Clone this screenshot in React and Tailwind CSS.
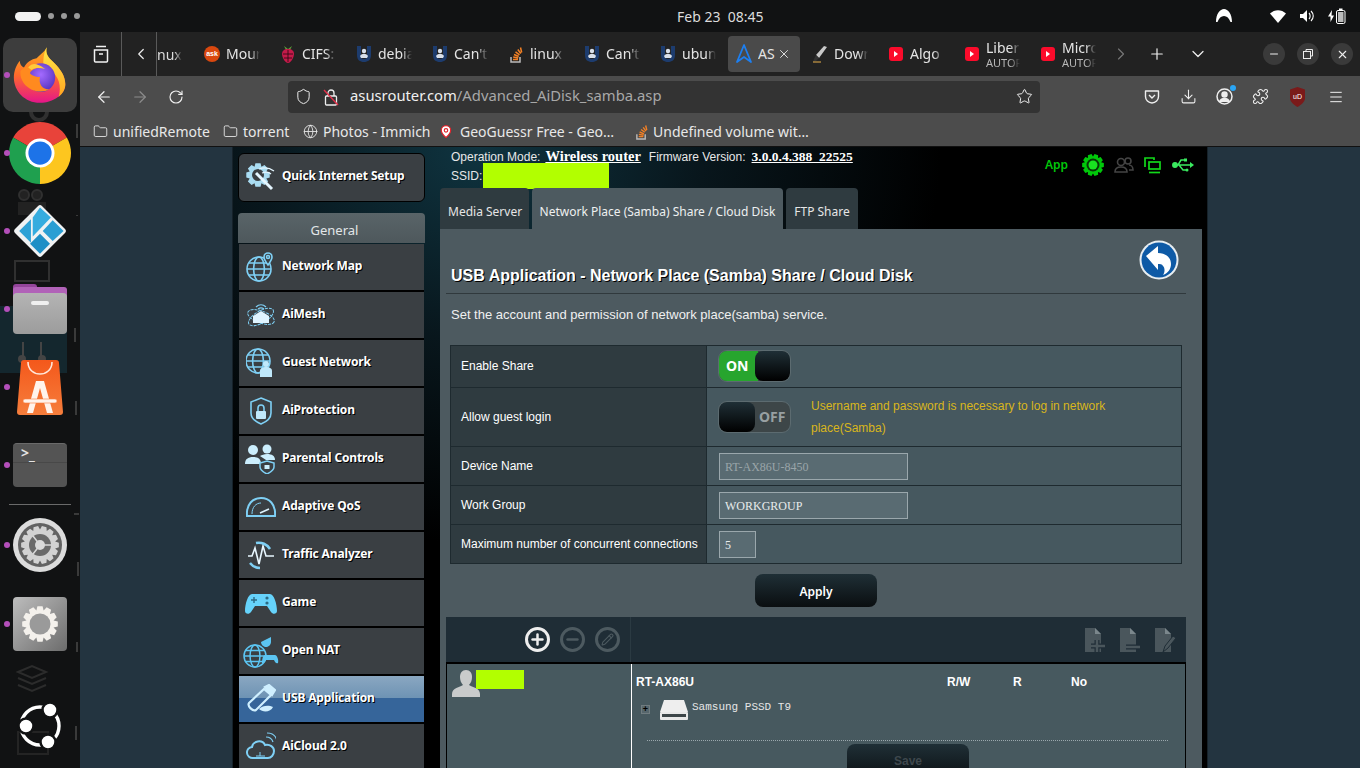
import React from "react";
import {
  ArrowLeft, ArrowRight, RotateCw, Star, Download, Menu, Folder, Globe, X, Plus, ChevronDown,
  ChevronLeft, ChevronRight, Minus, Shield, Puzzle, Pencil, MapPin,
} from "lucide-react";

const UI = "font-['Noto_Sans',sans-serif]";
const ARIAL = "font-['Liberation_Sans',Arial,sans-serif]";

const gear = (cx, cy, ro, ri, n) => {
  let d = "";
  for (let i = 0; i < n; i++) {
    const a = (i / n) * Math.PI * 2;
    const w = Math.PI / n;
    const pts = [[ri, a - w], [ro, a - w * 0.55], [ro, a + w * 0.55], [ri, a + w]];
    pts.forEach(([r, t], k) => {
      d += `${i === 0 && k === 0 ? "M" : "L"}${(cx + r * Math.cos(t)).toFixed(2)} ${(cy + r * Math.sin(t)).toFixed(2)} `;
    });
  }
  return d + "Z";
};

/* ---------- dock icons ---------- */
const FirefoxIcon = () => (
  <svg width="54" height="56" viewBox="0 0 64 66">
    <defs>
      <linearGradient id="ffa" x1="0" y1="0" x2="0" y2="1">
        <stop offset="0" stopColor="#ffb31f" />
        <stop offset="0.5" stopColor="#ff6a2b" />
        <stop offset="1" stopColor="#e5158a" />
      </linearGradient>
      <linearGradient id="ffb" x1="0" y1="0" x2="0" y2="1">
        <stop offset="0" stopColor="#ffe94a" />
        <stop offset="1" stopColor="#ffa51f" />
      </linearGradient>
      <radialGradient id="ffc" cx="0.5" cy="0.4" r="0.7">
        <stop offset="0" stopColor="#a46bff" />
        <stop offset="1" stopColor="#4a2bb5" />
      </radialGradient>
    </defs>
    <path d="M40 0c-2 8 2 12 8 18 8 8 14 16 14 26 0 12-14 22-30 22C14 66 1 52 1 36c0-8 3-15 7-20 0 4 2 7 5 8 3-6 9-10 15-11 4-4 9-7 12-13z" fill="url(#ffa)" />
    <path d="M40 0c-2 8 2 12 8 18 8 8 14 16 14 26 0 6-3 11-8 15 4-12 0-26-10-31-4-2-9-4-8-12 0-6 2-12 4-16z" fill="url(#ffb)" />
    <circle cx="33" cy="36" r="17" fill="url(#ffc)" />
    <path d="M9 28c6-7 14-7 19-3-4 1-7 3-8 6 3 3 7 5 12 4-2 9 3 15 11 15-8 5-22 3-30-7-3-4-5-10-4-15z" fill="#ff8a1f" />
    <path d="M18 24c3-4 8-5 12-3 3 1 6 3 8 5-6-2-12-2-16 1z" fill="#ffc93a" />
  </svg>
);

const ChromeIcon = () => (
  <svg width="62" height="62" viewBox="0 0 64 64">
    <path d="M32 32L4.3 16A32 32 0 0 1 59.7 16Z" fill="#e8433a" />
    <path d="M32 32L59.7 16A32 32 0 0 1 32 64Z" fill="#fdc61f" />
    <path d="M32 32L32 64A32 32 0 0 1 4.3 16Z" fill="#1fa04f" />
    <circle cx="32" cy="32" r="15" fill="#fff" />
    <circle cx="32" cy="32" r="12" fill="#1d73e8" />
  </svg>
);

const KodiIcon = () => (
  <svg width="58" height="58" viewBox="0 0 64 64">
    <rect x="11" y="11" width="42" height="42" rx="3" transform="rotate(45 32 32)" fill="#f0f2f3" />
    <path d="M9 32L22 19V45Z" fill="#2ea2d6" />
    <path d="M24 17L32 6L44 17L24 38Z" fill="#35acdf" />
    <path d="M46 20L58 32L46 43L35 32Z" fill="#2a9ed3" />
    <path d="M32 35L43 46L32 57L21 46Z" fill="#1e8fc6" />
  </svg>
);

const FilesIcon = () => (
  <div className="relative w-[54px] h-[50px]">
    <div className="absolute left-0 top-0 w-[24px] h-[12px] rounded-t-[3px] bg-[#93459a]" />
    <div className="absolute left-0 top-[3px] w-[54px] h-[16px] rounded-t-[3px] bg-[#b162b8]" />
    <div className="absolute left-0 top-[9px] w-[54px] h-[41px] rounded-[4px] bg-[linear-gradient(#b4b4b4,#9c9c9c)] flex justify-center pt-[8px]">
      <div className="w-[18px] h-[4px] rounded-sm bg-[#f0f0f0]" />
    </div>
  </div>
);

const StoreIcon = () => (
  <svg width="48" height="55" viewBox="0 0 48 55">
    <defs>
      <linearGradient id="stb" x1="0" y1="0" x2="0" y2="1">
        <stop offset="0" stopColor="#f4581b" />
        <stop offset="1" stopColor="#f67e3c" />
      </linearGradient>
    </defs>
    <path d="M5 3a3 3 0 0 1 3-3h32a3 3 0 0 1 3 3l4 49a3 3 0 0 1-3 3H4a3 3 0 0 1-3-3z" fill="url(#stb)" />
    <path d="M12 2c0 16 24 16 24 0" fill="none" stroke="#ffe6d8" strokeWidth="1.6" />
    <path d="M20 21h8l9 32h-6l-7-25-7 25h-6z" fill="#fff3ec" />
    <rect x="7" y="39" width="34" height="4" rx="2" fill="#fff3ec" stroke="#f67e3c" strokeWidth="0.6" />
  </svg>
);

const TerminalIcon = () => (
  <div className="w-[54px] h-[44px] rounded-[4px] bg-[#545454] border-t border-[#6a6a6a] overflow-hidden">
    <div className={`${UI} h-[19px] border-b border-[#484848] pl-[8px] text-[14px] leading-[17px] font-bold text-[#e4e4e4] whitespace-pre`}>
      {">"}
      <span className="relative top-[2px]">_</span>
    </div>
  </div>
);

const DiskIcon = () => (
  <svg width="54" height="54" viewBox="0 0 54 54">
    <circle cx="27" cy="27" r="27" fill="#dcdcdc" />
    <circle cx="27" cy="27" r="22" fill="#626262" />
    <path d={gear(27, 27, 19, 15.5, 14)} fill="#d2d2d2" />
    <circle cx="27" cy="27" r="11" fill="#6a6a6a" />
    <circle cx="27" cy="27" r="5" fill="#d9d9d9" />
    <path d="M27 27L38 27M27 27L20 18M27 27L20 36" stroke="#d9d9d9" strokeWidth="1.5" />
  </svg>
);

const SettingsIcon = () => (
  <div className="w-[54px] h-[54px] rounded-[4px] bg-[linear-gradient(135deg,#bdbdbd,#6c6c6c)] flex items-center justify-center">
    <svg width="36" height="36" viewBox="0 0 36 36">
      <path d={gear(18, 18, 18, 14, 12)} fill="#f4f1ec" />
      <circle cx="18" cy="18" r="10.5" fill="#9a9a9a" />
    </svg>
  </div>
);

const UbuntuIcon = () => (
  <svg width="46" height="46" viewBox="0 0 46 46">
    <circle cx="23" cy="23" r="19" fill="none" stroke="#fff" strokeWidth="3.4" />
    <g fill="#fff" stroke="#111213" strokeWidth="2.5">
      <circle cx="9" cy="23" r="7.5" />
      <circle cx="33" cy="7" r="7.5" />
      <circle cx="31" cy="39" r="7.5" />
    </g>
  </svg>
);

const dockTop = [
  { icon: <ChromeIcon />, dot: true },
  { icon: <KodiIcon />, dot: true },
  { icon: <FilesIcon />, dot: true },
  { icon: <StoreIcon />, dot: true },
  { icon: <TerminalIcon />, dot: true },
];

const DockItem = ({ dot, children }) => (
  <div className="relative h-[78px] flex items-center justify-center">
    {dot && <span className="absolute left-[3.5px] top-[36px] w-[6px] h-[6px] rounded-full bg-[#b44fba]" />}
    {children}
  </div>
);

const Dock = () => (
  <div className="relative w-[80px] shrink-0 bg-[#111213] overflow-hidden">
    {/* desktop icons showing faintly through the dock */}
    <svg className="absolute left-0 top-0" width="80" height="736" fill="none" stroke="#303030" strokeWidth="2">
      <rect x="0" y="274" width="67" height="67" fill="#14272e" stroke="none" />
      <circle cx="39" cy="80" r="8" strokeWidth="4" />
      <path d="M39 68v12" strokeWidth="3" />
      <circle cx="24" cy="163" r="5" fill="#222" />
      <circle cx="37" cy="163" r="5" fill="#222" />
      <rect x="18" y="170" width="28" height="13" fill="#222" stroke="none" />
      <rect x="15" y="229" width="34" height="20" />
      <circle cx="22" cy="327" r="4" fill="#444" stroke="none" />
      <circle cx="42" cy="327" r="4" fill="#444" stroke="none" />
      <path d="M23 310v18M41 310v18" stroke="#444" />
      <path d="M77 92v14M77 183v1M75 296v14M76 369v14M74 482h5M78 530v14M77 610v10M76 694v14" stroke="#3a3a3a" />
      <path d="M18 640l14-6 14 6-14 6zM18 646l14 6 14-6M18 653l14 6 14-6" stroke="#2c2c2c" />
      <rect x="18" y="700" width="30" height="22" stroke="#242424" />
    </svg>

    <div className="relative flex flex-col items-stretch pt-[4px]">
      <DockItem dot>
        <div className="w-[74px] h-[74px] rounded-[10px] bg-[#3d3d3d] flex items-center justify-center">
          <FirefoxIcon />
        </div>
      </DockItem>
      {dockTop.map((d, i) => (
        <DockItem key={i} dot={d.dot}>
          {d.icon}
        </DockItem>
      ))}
      <div className="mx-[9px] h-px mb-px bg-[#6a6a6a]" />
      <DockItem dot>
        <DiskIcon />
      </DockItem>
      <div className="h-px" />
      <DockItem dot>
        <SettingsIcon />
      </DockItem>
      <div className="h-[24px]" />
      <DockItem>
        <UbuntuIcon />
      </DockItem>
    </div>
  </div>
);

/* ---------- top bar ---------- */
const TopBar = () => (
  <div className={`${UI} h-[32px] shrink-0 bg-[#111213] flex items-center pl-[15px] pr-[14px] text-[#dcdcdc]`}>
    <div className="flex items-center gap-[7px] w-[400px]">
      <span className="w-[26px] h-[9px] rounded-full bg-[#f2f2f2]" />
      <span className="w-[6px] h-[6px] rounded-full bg-[#9a9a9a]" />
      <span className="w-[6px] h-[6px] rounded-full bg-[#9a9a9a]" />
      <span className="w-[6px] h-[6px] rounded-full bg-[#9a9a9a]" />
    </div>
    <div className="ml-[262px] text-[14px] whitespace-pre">Feb 23  08:45</div>
    <div className="ml-auto flex items-center gap-[14px]">
      <svg width="16" height="14" viewBox="0 0 16 14" className="mr-[23px]">
        <path d="M0 13C0 5 4 0 8 0s8 5 8 13h-1.5C13 9 11 7 8 7s-5 2-6.5 6z" fill="#fff" />
      </svg>
      <svg width="16" height="13" viewBox="0 0 16 13" className="ml-[1px]">
        <path d="M0 3.5C4.5-1 11.5-1 16 3.5L8 13z" fill="#fff" />
      </svg>
      <svg width="14" height="14" viewBox="0 0 14 14">
        <path d="M0 5h3l4-4v12l-4-4H0z" fill="#fff" />
        <path d="M9 4c1.5 1.5 1.5 4.5 0 6M11 2c3 3 3 7 0 10" stroke="#fff" fill="none" strokeWidth="1.1" />
      </svg>
      <svg width="18" height="16" viewBox="0 0 18 16">
        <path d="M4 2L0 8.500h2.500V14L6 7.500H3.500z" fill="#fff" />
        <rect x="8.500" y="2.500" width="8.500" height="13" rx="1.500" fill="none" stroke="#fff" />
        <rect x="10" y="4" width="5.500" height="10" fill="#bbb" />
        <rect x="11" y="0.500" width="3.500" height="2" fill="#fff" />
      </svg>
    </div>
  </div>
);

/* ---------- favicons ---------- */
const YT = () => (
  <div className="w-[14px] h-[14px] rounded-[3px] bg-[#fb0b2b] flex items-center justify-center">
    <span className="w-0 h-0 border-y-[3px] border-y-transparent border-l-[4px] border-l-white" />
  </div>
);
const Ask = () => (
  <div className={`${ARIAL} w-[16px] h-[16px] rounded-full bg-[#d9480f] text-white text-[7px] font-bold leading-[16px] text-center`}>ask</div>
);
const Raspberry = () => (
  <svg width="14" height="18" viewBox="0 0 14 18">
    <path d="M3 1l4 3 4-3-2 4H5z" fill="#5da13a" />
    <path d="M7 4c4 0 6 2 6 5s-3 9-6 9-6-6-6-9 2-5 6-5z" fill="#c51a4a" />
    <path d="M2 9h10M3 13h8M7 5v12" stroke="#23090f" strokeWidth="0.8" />
  </svg>
);
const Unix = () => (
  <svg width="16" height="18" viewBox="0 0 16 18">
    <path d="M1 1h4v9c0 3 1 4 3 4s3-1 3-4V1h4v9c0 5-3 7-7 7s-7-2-7-7z" fill="#1d3c6e" />
    <circle cx="8" cy="6" r="2.200" fill="#d8dfea" />
    <path d="M4 11c2-3 6-3 8 0l-1 2H5z" fill="#d8dfea" />
  </svg>
);
const SO = ({ s = 14 }) => (
  <svg width={s} height={s + 3} viewBox="0 0 14 17" fill="none" strokeWidth="1.500">
    <path d="M2 11v5h9v-5" stroke="#bcbbbb" />
    <path d="M4 13.500h5M4.200 11l5 1M5 8.500l4.700 2M6.500 5.800l4 3M8.800 3.500l3 4M11.500 1.500l1.200 5" stroke="#f48024" />
  </svg>
);
const Asus = () => (
  <svg width="16" height="20" viewBox="0 0 16 20" fill="none" stroke="#1d7ff0" strokeWidth="1.800" strokeLinejoin="round">
    <path d="M8 1L1 18l7-5 7 5z" />
  </svg>
);
const Dl = () => (
  <svg width="16" height="18" viewBox="0 0 16 18">
    <path d="M15 2l-3-1-8 9 3 3z" fill="#c9c9c9" />
    <path d="M4 10l3 3-3 3-3 1 1-3z" fill="#333" />
    <path d="M1 17h8" stroke="#e9b04a" />
  </svg>
);

const tabs = [
  { fav: <Ask />, t: "Mour" },
  { fav: <Raspberry />, t: "CIFS:" },
  { fav: <Unix />, t: "debia" },
  { fav: <Unix />, t: "Can't" },
  { fav: <SO />, t: "linux" },
  { fav: <Unix />, t: "Can't" },
  { fav: <Unix />, t: "ubun" },
  { fav: <Asus />, t: "AS", active: true },
  { fav: <Dl />, t: "Dowr" },
  { fav: <YT />, t: "Algo" },
  { fav: <YT />, t: "Liber", sub: "AUTOP" },
  { fav: <YT />, t: "Micro", sub: "AUTOP" },
];

const fade = "[mask-image:linear-gradient(to_right,black_70%,transparent)]";

const Tab = ({ fav, t, sub, active }) => (
  <div className={`w-[72px] h-[36px] shrink-0 mr-[4px] rounded-[4px] flex items-center pl-[8px] relative ${active ? "bg-[#4a4a4a]" : ""}`}>
    <div className="w-[16px] flex justify-center shrink-0">{fav}</div>
    <div className={`ml-[6px] w-[34px] overflow-hidden whitespace-nowrap ${active ? "" : fade}`}>
      <div className={`text-[14px] ${sub ? "leading-[17px]" : "leading-[20px]"} text-[#e4e4e4]`}>{t}</div>
      {sub && <div className="text-[11px] leading-[13px] text-[#b8b8b8]">{sub}</div>}
    </div>
    {active && <X size={14} strokeWidth={1.5} className="absolute right-[9px] text-[#f0f0f0]" />}
  </div>
);

const TabBar = () => (
  <div className={`${UI} h-[44px] shrink-0 bg-[#222222] flex items-center text-[#eee]`}>
    <div className="w-[42px] h-full border-r border-[#5a5a5a] flex items-center justify-center">
      <svg width="16" height="18" viewBox="0 0 16 18" fill="none" stroke="#f2f2f2" strokeWidth="1.500">
        <path d="M3 1.500h10M1.500 5h13v11a1 1 0 0 1-1 1h-11a1 1 0 0 1-1-1zM6 9h4" />
      </svg>
    </div>
    <div className="w-[35px] h-full border-r border-[#5a5a5a] flex items-center justify-center pl-[4px]">
      <ChevronLeft size={18} strokeWidth={1.6} className="text-[#eee]" />
    </div>
    <div className="w-[39px] text-[14px] text-[#ddd] overflow-hidden">
      <div className={`w-[25px] ${fade}`}>nux</div>
    </div>
    {tabs.map((t, i) => (
      <Tab key={i} {...t} />
    ))}
    <ChevronRight size={20} strokeWidth={1.4} className="ml-[3px] text-[#777]" />
    <Plus size={18} strokeWidth={1.6} className="ml-[17px]" />
    <ChevronDown size={20} strokeWidth={1.5} className="ml-[22px]" />
    <div className="ml-auto mr-[7px] flex items-center gap-[12px]">
      <span className="w-[22px] h-[22px] rounded-full bg-[#3a3a3a] flex items-center justify-center"><Minus size={12} /></span>
      <span className="w-[22px] h-[22px] rounded-full bg-[#3a3a3a] flex items-center justify-center">
        <svg width="10" height="10" viewBox="0 0 10 10" fill="none" stroke="#eee"><rect x="0.500" y="2.500" width="7" height="7" /><path d="M3 2.500V.5h6.500V7H7.500" /></svg>
      </span>
      <span className="w-[22px] h-[22px] rounded-full bg-[#3a3a3a] flex items-center justify-center"><X size={13} /></span>
    </div>
  </div>
);

const NavBar = () => (
  <div className={`${UI} h-[41px] shrink-0 bg-[#4c4c4c] flex items-center text-[#f0f0f0]`}>
    <ArrowLeft size={18} strokeWidth={1.6} className="ml-[15px]" />
    <ArrowRight size={18} strokeWidth={1.6} className="ml-[18px] text-[#8c8c8c]" />
    <RotateCw size={16} strokeWidth={1.7} className="ml-[19px]" />
    <div className="ml-[104px] w-[752px] h-[32px] rounded-[4px] bg-[#333333] flex items-center">
      <Shield size={17} strokeWidth={1.4} className="ml-[7px]" />
      <svg width="16" height="18" viewBox="0 0 16 18" fill="none" className="ml-[11px]">
        <rect x="2.500" y="8" width="11" height="9" rx="1" stroke="#eee" strokeWidth="1.300" />
        <path d="M5 8V5a3 3 0 0 1 6 0v3" stroke="#eee" strokeWidth="1.300" />
        <path d="M1 2l14 15" stroke="#e2304a" strokeWidth="1.400" />
      </svg>
      <div className="ml-[11px] pb-[2px] text-[14.8px] whitespace-nowrap text-[#f0f0f0]">
        asusrouter.com<span className="text-[#a8a8a8]">/Advanced_AiDisk_samba.asp</span>
      </div>
      <Star size={17} strokeWidth={1.4} className="ml-auto mr-[7px]" />
    </div>
    <svg width="16" height="16" viewBox="0 0 16 16" fill="none" stroke="#eee" strokeWidth="1.400" className="ml-[104px]">
      <path d="M1.500 2h13v5.500a6.500 6.500 0 0 1-13 0z" strokeLinejoin="round" />
      <path d="M5 6l3 3 3-3" />
    </svg>
    <Download size={17} strokeWidth={1.5} className="ml-[20px]" />
    <div className="relative ml-[19px]">
      <svg width="17" height="17" viewBox="0 0 17 17" fill="none" stroke="#eee" strokeWidth="1.500">
        <circle cx="8.500" cy="8.500" r="7.500" />
        <circle cx="8.500" cy="6.500" r="2.500" fill="#eee" />
        <path d="M3.500 14c1-3 3-3.500 5-3.500s4 .5 5 3.500" fill="#eee" />
      </svg>
      <span className="absolute -right-[3px] -top-[3px] w-[6px] h-[6px] rounded-full bg-[#2aa5f5]" />
    </div>
    <Puzzle size={17} strokeWidth={1.5} className="ml-[19px]" />
    <div className="relative ml-[20px]">
      <svg width="17" height="20" viewBox="0 0 17 20">
        <path d="M1 2.500L8.500 0 16 2.500V11c0 4-4 7-7.500 9C5 18 1 15 1 11z" fill="#7a1a1a" />
      </svg>
      <span className={`${ARIAL} absolute inset-0 text-center text-[7px] leading-[19px] text-white`}>uD</span>
    </div>
    <Menu size={16} strokeWidth={1.5} className="ml-[22px]" />
  </div>
);

const Bookmark = ({ icon, t, w, gap = "gap-[5px]" }) => (
  <div className={`flex items-center whitespace-nowrap ${gap}`} style={{ width: w }}>
    {icon}
    <span>{t}</span>
  </div>
);

const BookmarkBar = () => (
  <div className={`${UI} h-[30px] shrink-0 bg-[#4c4c4c] border-b border-[#111] flex items-center pl-[13px] text-[14px] text-[#e8e8e8]`}>
    <Bookmark w={130} t="unifiedRemote" icon={<Folder size={15} strokeWidth={1.4} />} />
    <Bookmark w={80} t="torrent" icon={<Folder size={15} strokeWidth={1.4} />} />
    <Bookmark w={136} t="Photos - Immich" icon={<Globe size={15} strokeWidth={1.4} />} />
    <Bookmark
      w={196}
      gap="gap-[7px]"
      t="GeoGuessr Free - Geo…"
      icon={
        <span className="w-[14px] flex justify-center">
          <MapPin size={15} fill="#fff" className="text-[#e0242c]" />
        </span>
      }
    />
    <Bookmark w={190} t="Undefined volume wit…" icon={<SO s={13} />} />
  </div>
);

/* ---------- router side menu ---------- */
const B = "#7fd0f5";
const svgProps = { width: 30, height: 30, viewBox: "0 0 30 30", fill: "none", stroke: B, strokeWidth: 1.6 };

const GlobeGlyph = ({ cx = 12, cy = 17, r = 11 }) => (
  <g>
    <circle cx={cx} cy={cy} r={r} />
    <ellipse cx={cx} cy={cy} rx={r * 0.45} ry={r} />
    <path d={`M${cx - r} ${cy}h${r * 2}M${cx - r * 0.85} ${cy - r * 0.5}h${r * 1.7}M${cx - r * 0.85} ${cy + r * 0.5}h${r * 1.7}`} />
  </g>
);

const menuIcons = {
  map: (
    <svg {...svgProps}>
      <GlobeGlyph cx={13} cy={17} r={12} />
      <path d="M22 13c-3-4-4-6-4-8a4 4 0 0 1 8 0c0 2-1 4-4 8z" fill="#3a3f43" />
      <circle cx="22" cy="5" r="1.500" />
    </svg>
  ),
  mesh: (
    <svg {...svgProps}>
      <ellipse cx="15" cy="17" rx="14" ry="6" strokeWidth="1" strokeDasharray="3 1" transform="rotate(20 15 17)" />
      <ellipse cx="15" cy="17" rx="14" ry="6" strokeWidth="1" strokeDasharray="3 1" transform="rotate(-30 15 17)" />
      <path d="M7 16l8-5 8 5v7H7z" fill="#dff4ff" stroke="none" />
      <path d="M10 7c3-3 7-3 10 0M12 9c2-1.500 4-1.500 6 0" strokeWidth="1.200" />
    </svg>
  ),
  guest: (
    <svg {...svgProps}>
      <GlobeGlyph cx={12} cy={13} r={12} />
      <circle cx="20" cy="16" r="3" fill="#bfe8fb" stroke="none" />
      <path d="M14 29v-6c0-3 3-4 6-4s6 1 6 4v6z" fill="#bfe8fb" stroke="none" />
    </svg>
  ),
  shield: (
    <svg {...svgProps}>
      <path d="M15 2l10 4v11c0 6-5 9-10 11-5-2-10-5-10-11V6z" />
      <rect x="10" y="15" width="10" height="8" rx="1" fill="#bfe8fb" stroke="none" />
      <path d="M12 15v-3a3 3 0 0 1 6 0v3" />
    </svg>
  ),
  parental: (
    <svg width="32" height="30" viewBox="0 0 32 30" fill="#cbeefd" stroke="none">
      <circle cx="8" cy="6" r="5" />
      <path d="M0 20c0-5 3-7 8-7s8 2 8 7z" />
      <circle cx="22" cy="5" r="4.500" />
      <path d="M15 12c2-1 4-2 7-2 5 0 8 2 8 6h-9z" />
      <path d="M22 17l7 2v4c0 3-3 5-7 7-4-2-7-4-7-7v-4z" fill="#3a3f43" stroke={B} strokeWidth="1.500" />
      <rect x="19.500" y="21" width="5" height="4" fill="#cbeefd" />
    </svg>
  ),
  qos: (
    <svg {...svgProps}>
      <path d="M1 24C0 12 7 6 15 6s15 6 14 18z" strokeWidth="2" />
      <path d="M6 22c0-7 4-11 9-11" strokeWidth="1" />
      <path d="M14 21l9-4" stroke="#dff4ff" />
    </svg>
  ),
  traffic: (
    <svg {...svgProps}>
      <path d="M2 16h4l3-8 4 16 4-18 3 10h8" stroke="#e8f7ff" />
      <path d="M10 3a13 13 0 0 1 14 6M4 23a13 13 0 0 0 10 5" strokeWidth="2.500" />
    </svg>
  ),
  game: (
    <svg width="32" height="30" viewBox="0 0 32 30" fill="none">
      <path d="M7 6h18c4 0 7 10 7 17 0 3-4 4-6 1l-4-6H10l-4 6c-2 3-6 2-6-1 0-7 3-17 7-17z" fill="#66d3fb" />
      <path d="M6 12h6M9 9v6" stroke="#2c6b85" strokeWidth="1.400" />
      <circle cx="22" cy="10" r="1.600" fill="#2c6b85" />
      <circle cx="22" cy="15" r="1.600" fill="#2c6b85" />
    </svg>
  ),
  nat: (
    <svg width="36" height="36" viewBox="0 0 36 36" fill="none" stroke="#5cc5f2" strokeWidth="1.500">
      <GlobeGlyph cx={12} cy={23} r={11} />
      <path d="M18 9l10-5v5c0 3-3 5-5 5s-5-2-5-5z" fill="#5cc5f2" stroke="none" />
      <path d="M22 22h10c2 0 4 5 3 8-2 1-3-1-4-3h-8c-1 2-3 4-4 3 0-4 1-8 3-8z" fill="#5cc5f2" stroke="none" />
    </svg>
  ),
  usb: (
    <svg {...svgProps} strokeWidth="2.200" stroke="#cfefff">
      <path d="M3 19L18 5l7 6-15 15c-3 2-9-4-7-7z" />
      <path d="M19 3l4-2 6 5-3 5z" fill="#cfefff" />
      <path d="M13 25c4-4 10-4 14-2-2 5-10 6-14 2z" fill="#cfefff" stroke="none" />
    </svg>
  ),
  cloud: (
    <svg {...svgProps}>
      <path d="M7 26a5.500 5.500 0 0 1-1-11c1-6 10-8 13-2 5-1 9 2 9 6s-3 7-6 7z" strokeWidth="2" />
      <path d="M10 24h9M14 24v-4" strokeWidth="1" />
      <path d="M20 5c3 0 6 2 7 5M21 1c5 0 9 3 10 8" strokeWidth="1.200" />
    </svg>
  ),
  quick: (
    <svg width="30" height="30" viewBox="0 0 30 30" fill="none">
      <path d={gear(12, 13, 12, 9, 8)} fill="#a9dcf2" />
      <circle cx="12" cy="13" r="6" fill="#3a3f43" />
      <path d="M10 11l16 16" stroke="#e4f6ff" strokeWidth="3" />
      <path d="M13 7c5-2 11-1 15 2M16 11c3-1 7-1 9 1" stroke="#e4f6ff" strokeWidth="1.200" />
    </svg>
  ),
};

const menu = [
  ["map", "Network Map"],
  ["mesh", "AiMesh"],
  ["guest", "Guest Network"],
  ["shield", "AiProtection"],
  ["parental", "Parental Controls"],
  ["qos", "Adaptive QoS"],
  ["traffic", "Traffic Analyzer"],
  ["game", "Game"],
  ["nat", "Open NAT"],
  ["usb", "USB Application"],
  ["cloud", "AiCloud 2.0"],
];

const MenuLabel = ({ children }) => (
  <span className="pb-[2px] text-[12px] font-bold tracking-[-0.15px] text-white [text-shadow:1px_1px_0_#000]">{children}</span>
);

const SideMenu = () => (
  <div className={`${UI} w-[187px] shrink-0 pt-[6px]`}>
    <div className="h-[49px] pb-[2px] rounded-[6px] border border-black bg-[#3a3f43] flex items-center">
      <div className="w-[43px] flex justify-center shrink-0">{menuIcons.quick}</div>
      <MenuLabel>Quick Internet Setup</MenuLabel>
    </div>
    <div className="mt-[11px] h-[30px] rounded-t-[4px] bg-[linear-gradient(#596468,#4e585c)] pl-[6px] text-center text-[13px] leading-[34px] text-[#e2e6e8]">
      General
    </div>
    <div className="mt-px ml-px w-[185px]">
      {menu.map(([k, label]) => (
        <div
          key={k}
          className={`h-[48px] border-b-2 border-black flex items-center ${label === "USB Application" ? "bg-[linear-gradient(#8aa7c1,#6e93b4_48%,#36659a_48%)]" : "bg-[#3a3f43]"}`}
        >
          <div className="w-[43px] flex justify-center shrink-0">{menuIcons[k]}</div>
          <MenuLabel>{label}</MenuLabel>
        </div>
      ))}
    </div>
  </div>
);

/* ---------- router content ---------- */
const Toggle = ({ on }) => (
  <div className="relative -ml-px w-[73px] h-[32px] rounded-[9px] border border-[#5c6b70] bg-[#3d4648] overflow-hidden shrink-0">
    {on ? (
      <div className="flex h-full">
        <div className={`${UI} w-[40px] bg-[#27a52e] text-[14px] font-bold text-white leading-[30px] pl-[7px]`}>ON</div>
        <div className="w-[36px] -ml-[3px] rounded-[8px] bg-[linear-gradient(#1f2f36,#000)]" />
      </div>
    ) : (
      <div className="flex h-full">
        <div className="w-[36px] rounded-[8px] bg-[linear-gradient(#1f2f36,#000)]" />
        <div className={`${UI} flex-1 text-[14px] font-bold text-[#98a0a2] leading-[30px] pl-[4px]`}>OFF</div>
      </div>
    )}
  </div>
);

const Field = ({ w, value, dim }) => (
  <div
    className={`h-[27px] border border-[#9aa7ac] bg-[#596b72] pl-[5px] font-['Liberation_Serif',serif] text-[12px] leading-[26px] ${dim ? "text-[#9aa5a9]" : "text-[#e8ecec]"}`}
    style={{ width: w }}
  >
    {value}
  </div>
);

const Row = ({ label, h, lift, children }) => (
  <div className="grid grid-cols-[256px_1fr] border-b border-[#1e2a2f]" style={{ height: h }}>
    <div className={`bg-[#2f3b40] border-r border-[#1e2a2f] flex items-center pl-[10px] text-[12px] text-white ${lift ? "pb-[1px]" : ""}`}>{label}</div>
    <div className={`bg-[#46585f] flex items-center pl-[12px] ${lift ? "pb-[1px]" : ""}`}>{children}</div>
  </div>
);

const SettingsTable = () => (
  <div className={`${ARIAL} ml-[10px] w-[732px] mt-[22px] border-t border-l border-r border-[#1e2a2f]`}>
    <Row label="Enable Share" h={42} lift>
      <Toggle on />
    </Row>
    <Row label="Allow guest login" h={59}>
      <Toggle />
      <div className="ml-[20px] w-[340px] text-[12px] leading-[22px] text-[#d9b61c]">
        Username and password is necessary to log in network place(Samba)
      </div>
    </Row>
    <Row label="Device Name" h={39}>
      <Field w={189} value="RT-AX86U-8450" dim />
    </Row>
    <Row label="Work Group" h={39}>
      <Field w={189} value="WORKGROUP" />
    </Row>
    <Row label="Maximum number of concurrent connections" h={39}>
      <Field w={37} value="5" />
    </Row>
  </div>
);

const CircleBtn = ({ children, on }) => (
  <span className={`w-[25px] h-[25px] rounded-full border-[3px] flex items-center justify-center ${on ? "border-[#eee] bg-[#1f2d36] text-[#eee]" : "border-[#4d5a60] text-[#4d5a60]"}`}>
    {children}
  </span>
);

const FileGlyph = ({ children }) => (
  <svg width="22" height="26" viewBox="0 0 22 26">
    <path d="M1 1h10l6 6v18H1z" fill="#4a565c" />
    <path d="M11 1v6h6z" fill="#7b878c" />
    {children}
  </svg>
);

const FileTree = () => (
  <div className={`${ARIAL} ml-[6px] mt-[10px] w-[740px] flex-1 flex flex-col min-h-0`}>
    <div className="h-[47px] shrink-0 bg-[#1f2d36] border-b-2 border-black flex">
      <div className="w-[185px] border-r border-[#2b3a42] flex items-center justify-end gap-[10px] pr-[10px]">
        <CircleBtn on><Plus size={17} strokeWidth={3.5} /></CircleBtn>
        <CircleBtn><Minus size={17} strokeWidth={3.5} /></CircleBtn>
        <CircleBtn><Pencil size={13} strokeWidth={2} /></CircleBtn>
      </div>
      <div className="flex-1 flex items-center justify-end gap-[13px] pr-[10px]">
        <FileGlyph>
          <path d="M13 13v12M7 19h14" stroke="#1f2d36" strokeWidth="5" />
          <path d="M13 13v12M7 19h14" stroke="#4a565c" strokeWidth="2.500" />
        </FileGlyph>
        <FileGlyph>
          <path d="M7 20h14" stroke="#1f2d36" strokeWidth="5" />
          <path d="M7 20h14" stroke="#4a565c" strokeWidth="2.500" />
        </FileGlyph>
        <FileGlyph>
          <path d="M9 25l2-6 8-10 3 2-8 10z" fill="#4a565c" stroke="#1f2d36" />
        </FileGlyph>
      </div>
    </div>
    <div className="flex-1 flex bg-[#47595f] border-l border-r border-black min-h-0">
      <div className="w-[185px] border-r border-white pt-[6px] pl-[5px] flex items-start">
        <svg width="28" height="27" viewBox="0 0 28 27" className="shrink-0">
          <path d="M14 0c4 0 6 3 6 7 0 3-1 6-3 8 3 2 11 3 11 9v3H0v-3c0-6 8-7 11-9-2-2-3-5-3-8 0-4 2-7 6-7z" fill="#c9cbcb" />
        </svg>
        <div className="-ml-[4px] w-[48px] h-[19px] bg-[#b2ff00]" />
      </div>
      <div className="flex-1 pl-[4px] pt-[10px]">
        <div className="flex text-[12px] font-bold text-white leading-[16px]">
          <span className="w-[311px]">RT-AX86U</span>
          <span className="w-[66px]">R/W</span>
          <span className="w-[58px]">R</span>
          <span>No</span>
        </div>
        <div className="flex items-start mt-[3px] ml-[5px]">
          <span className="mt-[12px] w-[9px] h-[9px] border border-[#707c80] bg-[#56666c] text-[9px] leading-[7px] text-center text-black font-bold">+</span>
          <svg width="30" height="22" viewBox="0 0 30 22" className="ml-[9px] mt-[6px]">
            <path d="M5 1h20l4 12H1z" fill="#eee" />
            <rect x="1" y="13" width="28" height="8" rx="1" fill="#e8e8e8" />
            <rect x="3" y="15" width="24" height="3" fill="#3c4548" />
          </svg>
          <span className="ml-[3px] mt-[7px] font-['Liberation_Mono',monospace] text-[11px] leading-[14px] text-[#e6e6e6]">Samsung PSSD T9</span>
        </div>
        <div className="ml-[11px] mt-[19px] w-[521px] border-t border-dotted border-[#9aa7ac]" />
        <div className="ml-[211px] mt-[3px] w-[122px] h-[34px] rounded-t-[8px] bg-[linear-gradient(#1f2f36,#0c1114)] text-center text-[12px] font-bold leading-[34px] text-[#3f484d]">
          Save
        </div>
      </div>
    </div>
  </div>
);

const RouterStatus = () => (
  <div className="flex items-center self-start h-[22px] gap-[10px] mt-[7px] mr-[8px]">
    <span className={`${UI} text-[12px] font-semibold text-[#00c80a] mr-[4px]`}>App</span>
    <svg width="22" height="22" viewBox="0 0 22 22">
      <path d={gear(11, 11, 11, 8.500, 10)} fill="#00c80a" />
      <circle cx="11" cy="11" r="6.500" fill="#063806" />
      <circle cx="11" cy="11" r="4.500" fill="#19e321" />
    </svg>
    <svg width="20" height="18" viewBox="0 0 20 18" fill="none" stroke="#444" strokeWidth="1.600">
      <circle cx="7" cy="6" r="3.500" />
      <circle cx="14" cy="5" r="3" />
      <path d="M1 16c0-4 3-5 6-5s6 1 6 5zM15 9c2 0 4 2 4 5h-4" />
    </svg>
    <svg width="18" height="18" viewBox="0 0 18 18" fill="none" stroke="#12d81a" strokeWidth="1.700">
      <path d="M1 11V2h9v2" />
      <rect x="5" y="6" width="11" height="7" />
      <path d="M5 16.500h11" />
    </svg>
    <svg width="22" height="14" viewBox="0 0 22 14" fill="none" stroke="#3bea60" strokeWidth="1.500">
      <path d="M2 7h18M6 7l3-5h3M7 7l4 5h3" />
      <circle cx="3" cy="7" r="2.200" fill="#3bea60" />
      <path d="M18 4l4 3-4 3z" fill="#3bea60" stroke="none" />
      <rect x="12" y="0.500" width="3" height="3" fill="#3bea60" stroke="none" />
      <circle cx="15" cy="12" r="1.500" fill="#3bea60" stroke="none" />
    </svg>
  </div>
);

const RouterHeader = () => (
  <div className={`${ARIAL} h-[41px] shrink-0 flex justify-between text-[12px] text-[#e8e8e8] pl-[11px]`}>
    <div>
      <div className="h-[16px] leading-[18px] whitespace-nowrap flex items-baseline">
        <span>Operation Mode:</span>
        <span className="ml-[5px] font-['Liberation_Serif',serif] text-[14.5px] font-bold underline text-white">Wireless router</span>
        <span className="ml-[8px]">Firmware Version:</span>
        <span className="ml-[6px] font-['Liberation_Serif',serif] text-[13.5px] font-bold underline text-white">3.0.0.4.388_22525</span>
      </div>
      <div className="flex items-center h-[26px]">
        <span className="w-[32px]">SSID:</span>
        <span className="w-[126px] h-[26px] bg-[#b2ff00]" />
      </div>
    </div>
    <RouterStatus />
  </div>
);

const RouterTabs = () => (
  <div className={`${UI} h-[41px] shrink-0 flex items-end gap-[3px] text-[12px]`}>
    <div className="w-[89px] h-[41px] rounded-t-[4px] bg-[#2f3b40] text-[#e6e6e6] pl-[8px] leading-[47px]">Media Server</div>
    <div className="w-[251px] h-[41px] rounded-t-[4px] bg-[#4d5a60] text-[#eef0f0] text-center leading-[47px]">Network Place (Samba) Share / Cloud Disk</div>
    <div className="w-[72px] h-[41px] rounded-t-[4px] bg-[#2f3b40] text-[#e6e6e6] text-center leading-[47px]">FTP Share</div>
  </div>
);

const BackButton = () => (
  <svg width="40" height="40" viewBox="0 0 40 40" className="mt-[11px] mr-[7px]">
    <circle cx="20" cy="20" r="19.500" fill="#e8eef2" />
    <circle cx="20" cy="20" r="17.500" fill="#0e5aa6" />
    <path d="M7 16L19 6v7c7 0 13 4 13 11 0 5-3 9-8 11 2-3 2-7 0-9-1-2-3-2-5-2v6z" fill="#fff" />
  </svg>
);

const RouterPanel = () => (
  <div className="flex-1 min-h-0 bg-[#4d5a60] flex flex-col">
    <div className="ml-[6px] w-[740px] h-[65px] shrink-0 border-b border-[#30393d] flex justify-between">
      <h1 className={`${ARIAL} pl-[5px] pt-[37px] text-[16px] leading-[20px] font-bold text-white [text-shadow:1px_1px_0_#000]`}>
        USB Application - Network Place (Samba) Share / Cloud Disk
      </h1>
      <BackButton />
    </div>
    <p className={`${ARIAL} mt-[13px] pl-[11px] text-[13px] leading-[16px] text-[#f0f0f0]`}>
      Set the account and permission of network place(samba) service.
    </p>
    <SettingsTable />
    <div className={`${UI} ml-[315px] mt-[10px] w-[122px] h-[33px] shrink-0 rounded-[8px] bg-[linear-gradient(#1f2f36,#0a0e10)] text-center text-[12px] font-semibold leading-[35px] text-white`}>
      Apply
    </div>
    <FileTree />
  </div>
);

const RouterPage = () => (
  <div className="flex-1 min-h-0 bg-[#233440] flex justify-center overflow-hidden">
    <div className="w-[976px] flex pl-[5px] border-l border-r border-[#16222a] bg-black bg-[radial-gradient(ellipse_at_25%_0%,#0f3440_0%,#08161c_22%,#000_45%)]">
      <SideMenu />
      <div className="ml-[15px] w-[762px] flex flex-col min-h-0">
        <RouterHeader />
        <RouterTabs />
        <RouterPanel />
      </div>
    </div>
  </div>
);

export default function App() {
  return (
    <div className="w-[1360px] h-[768px] flex flex-col overflow-hidden bg-[#111213]">
      <TopBar />
      <div className="flex-1 flex min-h-0">
        <Dock />
        <div className="flex-1 flex flex-col min-w-0">
          <TabBar />
          <NavBar />
          <BookmarkBar />
          <RouterPage />
        </div>
      </div>
    </div>
  );
}
